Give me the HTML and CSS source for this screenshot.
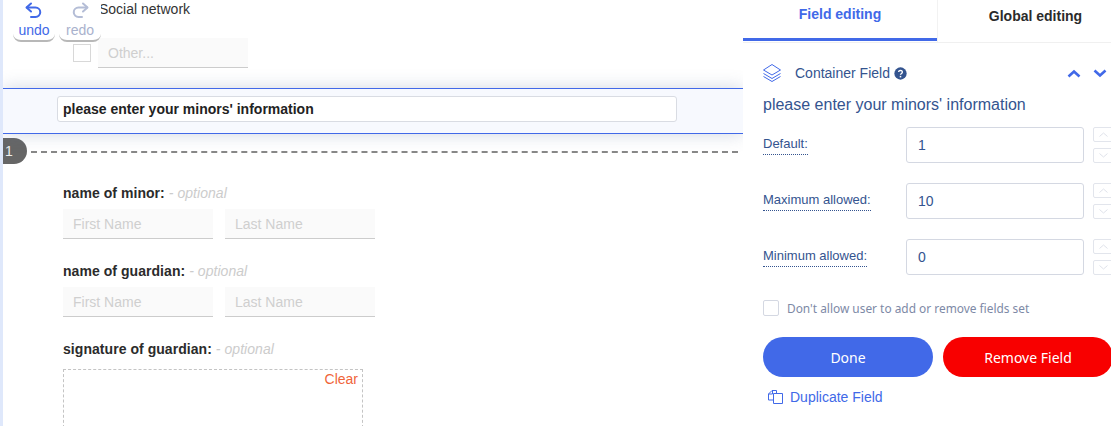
FILE: index.html
```html
<!DOCTYPE html>
<html>
<head>
	<meta charset="utf-8">
	<title>Form editor</title>
	<link rel="stylesheet" href="styles.css">
</head>
<body>
	<div class="page">
		<div class="canvas">
			<div class="historial">
				<div class="hist_btn">
					<svg width="20" height="17" viewBox="0 0 20 17" fill="none" stroke="#4169e8" stroke-width="2" stroke-linecap="round" stroke-linejoin="round"><path d="M7 1.5 2.5 5.5 7 9.5"/><path d="M3 5.5h8.5a4.5 4.5 0 0 1 0 9.500H7"/></svg>
					<span class="hist_txt">undo</span>
				</div>
				<div class="hist_btn hist_off">
					<svg width="20" height="17" viewBox="0 0 20 17" fill="none" stroke="#b4bdd6" stroke-width="2" stroke-linecap="round" stroke-linejoin="round"><path d="M13 1.5 17.5 5.5 13 9.5"/><path d="M17 5.5H8.5a4.5 4.5 0 0 0 0 9.500H12"/></svg>
					<span class="hist_txt">redo</span>
				</div>
			</div>

			<div class="opciones">
				<div class="opcion_titulo">Social network</div>
				<div class="opcion_otro">
					<span class="check"></span>
					<span class="campo campo_otro">Other...</span>
				</div>
			</div>

			<div class="seleccion">
				<div class="titulo_campo">please enter your minors' information</div>
			</div>

			<div class="separador">
				<span class="numero">1</span>
				<span class="guiones"></span>
			</div>

			<div class="bloque">
				<div class="etiqueta">name of minor: <em>- optional</em></div>
				<div class="fila">
					<span class="campo">First Name</span>
					<span class="campo">Last Name</span>
				</div>
			</div>
			<div class="bloque">
				<div class="etiqueta">name of guardian: <em>- optional</em></div>
				<div class="fila">
					<span class="campo">First Name</span>
					<span class="campo">Last Name</span>
				</div>
			</div>
			<div class="bloque">
				<div class="etiqueta">signature of guardian: <em>- optional</em></div>
				<div class="firma"><span class="limpiar">Clear</span></div>
			</div>
		</div>

		<div class="lateral">
			<div class="tabs">
				<div class="tab tab_activo">Field editing</div>
				<div class="tab">Global editing</div>
			</div>
			<div class="panel">
				<div class="panel_cab">
					<svg class="capas" width="18" height="20" viewBox="0 0 18 20" fill="none" stroke="#4169e8" stroke-width="1" stroke-linejoin="round"><path d="M9 1.5 17.5 7 9 12 .5 7Z"/><path d="M.5 10.500 9 15.500 17.500 10.500"/><path d="M.5 13.500 9 18.500 17.500 13.500"/></svg>
					<span class="panel_tipo">Container Field</span>
					<svg class="ayuda" width="13" height="13" viewBox="0 0 12 12"><circle cx="6" cy="6" r="5.7" fill="#34548f"/><path d="M4.3 4.700a1.700 1.500 0 1 1 2.600 1.300c-.6.4-.9.6-.9 1.200" fill="none" stroke="#fff" stroke-width="1.3"/><rect x="5.300" y="8.200" width="1.400" height="1.400" fill="#fff"/></svg>
					<span class="flechas">
						<svg width="14" height="9" viewBox="0 0 14 9" fill="none" stroke="#4169e8" stroke-width="2.6"><path d="M1.500 7.500 7 2.500 12.500 7.500"/></svg>
						<svg width="14" height="9" viewBox="0 0 14 9" fill="none" stroke="#4169e8" stroke-width="2.6"><path d="M1.500 1.500 7 6.500 12.500 1.500"/></svg>
					</span>
				</div>
				<div class="panel_titulo">please enter your minors' information</div>

				<div class="ajuste">
					<div class="ajuste_etq"><span>Default:</span></div>
					<div class="numerico">1</div>
					<div class="pasos">
						<span class="paso"><svg width="9" height="5" viewBox="0 0 9 5" fill="none" stroke="#dfe2ea"><path d="M.5 4.500 4.500 1 8.500 4.500"/></svg></span>
						<span class="paso"><svg width="9" height="5" viewBox="0 0 9 5" fill="none" stroke="#dfe2ea"><path d="M.5.500 4.500 4 8.500.5"/></svg></span>
					</div>
				</div>
				<div class="ajuste">
					<div class="ajuste_etq"><span>Maximum allowed:</span></div>
					<div class="numerico">10</div>
					<div class="pasos">
						<span class="paso"><svg width="9" height="5" viewBox="0 0 9 5" fill="none" stroke="#dfe2ea"><path d="M.5 4.500 4.500 1 8.500 4.500"/></svg></span>
						<span class="paso"><svg width="9" height="5" viewBox="0 0 9 5" fill="none" stroke="#dfe2ea"><path d="M.5.500 4.500 4 8.500.5"/></svg></span>
					</div>
				</div>
				<div class="ajuste">
					<div class="ajuste_etq"><span>Minimum allowed:</span></div>
					<div class="numerico">0</div>
					<div class="pasos">
						<span class="paso"><svg width="9" height="5" viewBox="0 0 9 5" fill="none" stroke="#dfe2ea"><path d="M.5 4.500 4.500 1 8.500 4.500"/></svg></span>
						<span class="paso"><svg width="9" height="5" viewBox="0 0 9 5" fill="none" stroke="#dfe2ea"><path d="M.5.500 4.500 4 8.500.5"/></svg></span>
					</div>
				</div>

				<div class="permiso">
					<span class="check_panel"></span>
					<span>Don't allow user to add or remove fields set</span>
				</div>

				<div class="botones">
					<button class="boton boton_ok">Done</button>
					<button class="boton boton_rojo">Remove Field</button>
				</div>

				<div class="duplicar">
					<svg width="15" height="14" viewBox="0 0 15 14" fill="none" stroke="#4169e8" stroke-width="1"><path d="M5.500 10H.5V4L4 .5h4.500v3"/><path d="M4.500.5v3.500H.5"/><path d="M5.500 3.500h9v10h-9Z"/></svg>
					<span>Duplicate Field</span>
				</div>
			</div>
		</div>
	</div>
</body>
</html>
```

FILE: styles.css
```css
* {
	box-sizing: border-box;
}

body {
	margin: 0;
	font-family: "Liberation Sans", Arial, sans-serif;
	background: white;
}

.page {
	display: flex;
	height: 426px;
	overflow: hidden;
	border-left: solid 3px #dfe8fb;
}

.canvas {
	position: relative;
	width: 740px;
	flex: none;
}

/* undo / redo float over the form */
.historial {
	position: absolute;
	top: 1px;
	left: 10px;
	display: flex;
	gap: 4px;
	z-index: 2;
}

.hist_btn {
	display: flex;
	flex-flow: column;
	align-items: center;
	width: 42px;
	height: 41px;
	padding-top: 1px;
	background: white;
	border-bottom: solid 2px #b8b8b8;
	border-radius: 0 0 8px 8px;
}

.hist_txt {
	font-size: 14px;
	line-height: 20px;
	margin-top: 1px;
	color: #4169e8;
}

.hist_off .hist_txt {
	color: #a9b2cd;
}

.opciones {
	height: 88px;
	padding: 0 0 0 70px;
}

.opcion_titulo {
	font-size: 14px;
	line-height: 18px;
	padding: 0 0 0 26px;
	color: #333;
}

.opcion_otro {
	display: flex;
	align-items: center;
	gap: 7px;
	margin-top: 20px;
}

.check {
	width: 18px;
	height: 18px;
	border: solid 1px #d8d8d8;
	background: white;
}

.campo {
	display: block;
	width: 150px;
	height: 30px;
	padding: 0 10px;
	font-size: 14px;
	line-height: 30px;
	color: #cfcfcf;
	background: #fafafa;
	border-bottom: solid 1px #cccccc;
}

.seleccion {
	position: relative;
	height: 46px;
	padding: 7px 0 0 54px;
	background: #f7f9fe;
	border-top: solid 1px #4169e8;
	border-bottom: solid 1px #4169e8;
	box-shadow: 0 0 18px rgba(90, 110, 150, 0.28);
}

.titulo_campo {
	width: 620px;
	height: 26px;
	padding: 0 5px;
	font-size: 14px;
	font-weight: bold;
	line-height: 25px;
	color: #222;
	background: white;
	border: solid 1px #d9dce3;
	border-radius: 3px;
}

.separador {
	display: flex;
	align-items: center;
	margin-top: 4px;
	height: 26px;
}

.numero {
	width: 24px;
	height: 26px;
	padding-left: 2px;
	font-size: 14px;
	line-height: 27px;
	color: #eee;
	background: #666;
	border-radius: 0 13px 13px 0;
}

.guiones {
	flex: 1;
	margin: 1px 5px 0 4px;
	height: 0;
	border-top: dashed 2px #888;
}

.bloque {
	padding: 20px 0 0 60px;
}

.bloque + .bloque {
	padding-top: 23px;
}

.etiqueta {
	font-size: 14px;
	font-weight: bold;
	line-height: 18px;
	letter-spacing: 0.05px;
	color: #2b2b2b;
	margin-bottom: 7px;
}

.etiqueta em {
	font-weight: normal;
	color: #ccc;
}

.fila {
	display: flex;
	gap: 12px;
}

.firma {
	width: 300px;
	height: 120px;
	padding: 0 4px;
	margin-top: 11px;
	text-align: right;
	border: dashed 1px #c4c4c4;
}

.limpiar {
	font-size: 14px;
	color: #f0653a;
}

.lateral {
	position: relative;
	width: 368px;
	flex: none;
	background: white;
}

.tabs {
	display: flex;
	height: 43px;
	border-bottom: solid 1px #f0f0f0;
}

.tab {
	width: 196px;
	flex: none;
	text-align: center;
	font-size: 14px;
	font-weight: bold;
	line-height: 32px;
	color: #2b2b2b;
	border-left: solid 1px #f2f2f2;
}

.tab_activo {
	width: 194px;
	height: 41px;
	line-height: 28px;
	color: #4169e8;
	border-left: none;
	border-bottom: solid 3px #4169e8;
}

.panel {
	padding: 0 0 0 20px;
}

.panel_cab {
	display: flex;
	align-items: center;
	height: 20px;
	margin-top: 20px;
	color: #34548f;
}

.capas {
	flex: none;
}

.panel_tipo {
	margin-left: 14px;
	font-size: 14px;
}

.ayuda {
	margin-left: 4px;
}

.flechas {
	display: flex;
	gap: 12px;
	margin-left: auto;
	margin-right: 4px;
}

.panel_titulo {
	margin-top: 12px;
	font-size: 16px;
	line-height: 20px;
	color: #34548f;
}

.ajuste {
	display: flex;
	height: 50px;
	margin-top: 6px;
}

.panel_titulo + .ajuste {
	margin-top: 12px;
}

.ajuste_etq {
	width: 143px;
	flex: none;
	padding-top: 8px;
	font-size: 13px;
	line-height: 18px;
	color: #34548f;
}

.ajuste_etq span {
	display: inline-block;
	height: 20px;
	border-bottom: dotted 1px #34548f;
}

.numerico {
	width: 178px;
	flex: none;
	height: 36px;
	padding-left: 11px;
	font-size: 14px;
	line-height: 34px;
	color: #34548f;
	border: solid 1px #d4d8e2;
	border-radius: 3px;
}

.pasos {
	display: flex;
	flex-flow: column;
	gap: 6px;
	margin-left: 9px;
	width: 20px;
	flex: none;
}

.paso {
	display: flex;
	align-items: center;
	justify-content: center;
	width: 20px;
	height: 15px;
	border: solid 1px #e2e5ec;
	border-radius: 2px;
}

.permiso {
	display: flex;
	align-items: center;
	gap: 8px;
	margin-top: 11px;
	font-family: "Noto Sans", sans-serif;
	font-size: 11.9px;
	line-height: 16px;
	color: #7d89a6;
}

.check_panel {
	width: 16px;
	height: 16px;
	border: solid 1px #d4d8e2;
	border-radius: 2px;
}

.botones {
	display: flex;
	gap: 10px;
	margin-top: 21px;
}

.boton {
	width: 170px;
	flex: none;
	height: 40px;
	padding: 0;
	font-family: "Noto Sans", sans-serif;
	font-size: 14px;
	color: white;
	border: none;
	border-radius: 20px;
}

.boton_ok {
	background: #4169e8;
}

.boton_rojo {
	background: #f80000;
}

.duplicar {
	display: flex;
	align-items: center;
	gap: 7px;
	margin: 11px 0 0 5px;
	font-size: 14px;
	line-height: 18px;
	color: #4169e8;
}
```
